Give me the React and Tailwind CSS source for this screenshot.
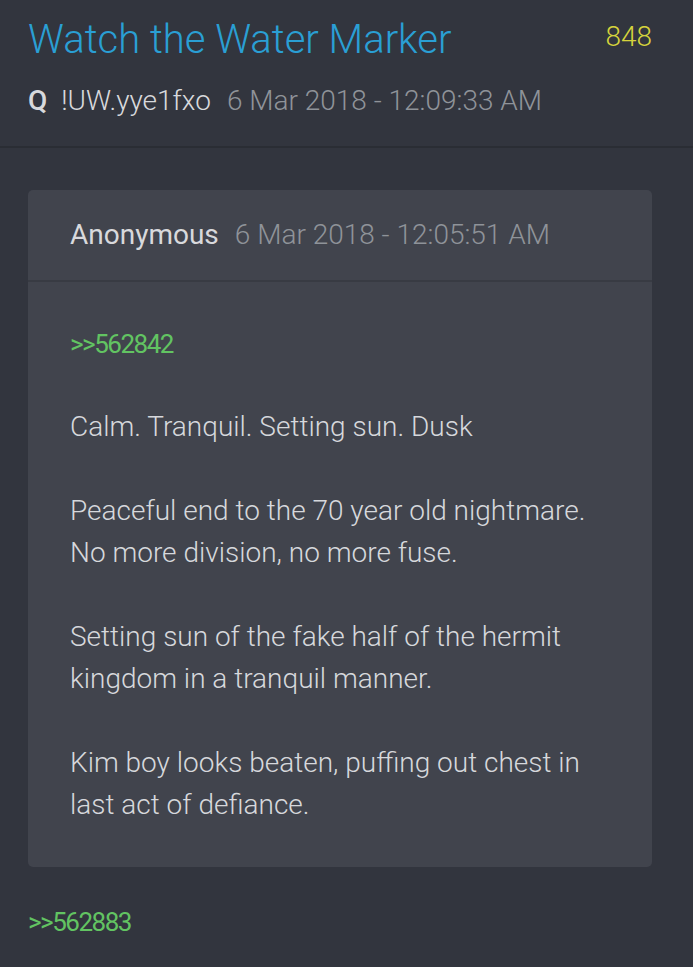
import React from 'react';

const quoted = {
  author: 'Anonymous',
  date: '6 Mar 2018 - 12:05:51 AM',
  ref: '>>562842',
  paragraphs: [
    ['Calm. Tranquil. Setting sun. Dusk'],
    ['Peaceful end to the 70 year old nightmare.', 'No more division, no more fuse.'],
    ['Setting sun of the fake half of the hermit', 'kingdom in a tranquil manner.'],
    ['Kim boy looks beaten, puffing out chest in', 'last act of defiance.'],
  ],
};

const light = "font-['Roboto_Light','Roboto',sans-serif] font-light";

const App = () => {
  return (
    <div className="min-h-screen bg-[#32353e] font-['Roboto',sans-serif]">
      {/* Post header */}
      <div className="border-b-2 border-[#2a2d34] pl-[28px] pr-[41px] pt-[18px] pb-[27px]">
        <div className="flex items-start justify-between">
          <h1 className={`${light} text-[40px] leading-[44px] text-[#2a9fd4]`}>Watch the Water Marker</h1>
          <span className={`${light} mt-[1px] text-[28px] leading-[36px] text-[#d6d33c]`}>848</span>
        </div>
        <div className="mt-[21px] flex items-baseline text-[28px] leading-[36px]">
          <span className="mr-[14px] font-medium text-[#d8d9dc]">Q</span>
          <span className={`${light} mr-[16px] text-[#d8d9dc]`}>!UW.yye1fxo</span>
          <span className={`${light} text-[#8f9399]`}>6 Mar 2018 - 12:09:33 AM</span>
        </div>
      </div>

      {/* Quoted post */}
      <div className="ml-[28px] mr-[41px] mt-[42px] rounded-[5px] bg-[#41444d]">
        <div className="flex h-[92px] items-center gap-[16px] border-b-2 border-[#383b43] px-[42px] text-[28px]">
          <span className="font-normal text-[#d8d9dc]">{quoted.author}</span>
          <span className={`${light} text-[#8f9399]`}>{quoted.date}</span>
        </div>
        <div className="px-[42px] pt-[46px] pb-[41px]">
          <p className="text-[26px] leading-[32px] tracking-[-1.5px] text-[#62c462]">{quoted.ref}</p>
          <div className={`${light} mt-[46px] flex flex-col gap-[42px] text-[28px] leading-[42px] text-[#d6d8dc]`}>
            {quoted.paragraphs.map((lines, i) => (
              <p key={i}>
                {lines.map((l, j) => (
                  <span key={j} className="block">{l}</span>
                ))}
              </p>
            ))}
          </div>
        </div>
      </div>

      <p className="px-[28px] pt-[39px] text-[26px] leading-[32px] tracking-[-1.5px] text-[#62c462]">&gt;&gt;562883</p>
    </div>
  );
};

export default App;
